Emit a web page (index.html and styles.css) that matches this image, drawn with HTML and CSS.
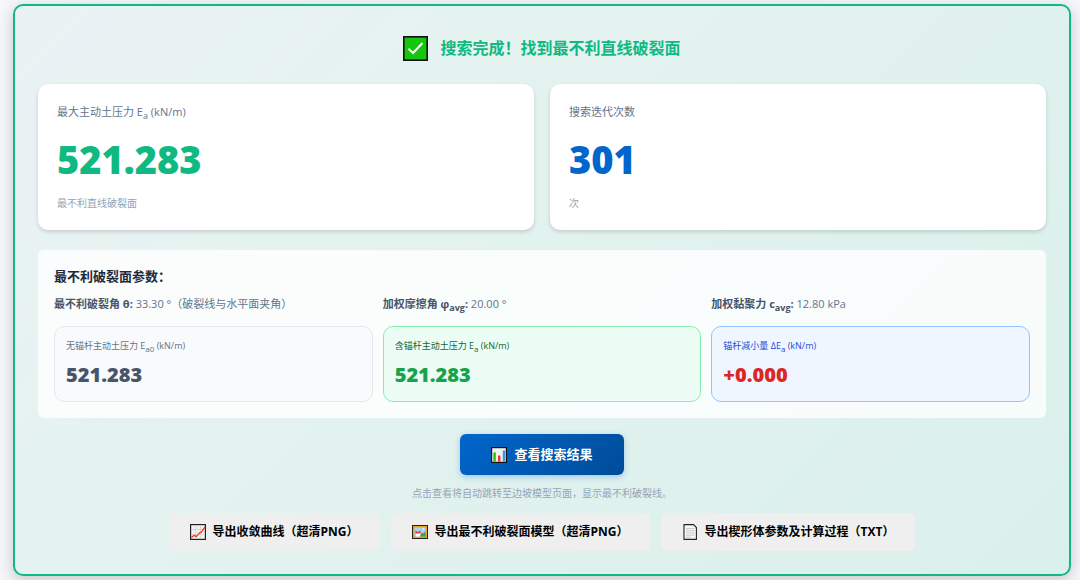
FILE: index.html
```html
<!DOCTYPE html>
<html lang="zh-CN">
<head>
  <meta charset="UTF-8" />
  <meta name="viewport" content="width=device-width, initial-scale=1" />
  <title>最不利直线破裂面搜索</title>
  <link rel="stylesheet" href="styles.css">
</head>
<body>
  <main class="result-panel">
    <h2 class="result-title">
      <svg class="icon-done" viewBox="0 0 25 25" aria-hidden="true">
        <rect x="0.8" y="0.8" width="23.4" height="23.4" fill="#16c60c" stroke="#111" stroke-width="1.6"/>
        <path d="M5.5 12.8 L10 17 L19.5 7" fill="none" stroke="#fff" stroke-width="2"/>
      </svg>
      搜索完成！找到最不利直线破裂面
    </h2>

    <div class="summary">
      <div class="card">
        <div class="card-label">最大主动土压力 E<sub>a</sub> (kN/m)</div>
        <div class="card-value green">521.283</div>
        <div class="card-note">最不利直线破裂面</div>
      </div>
      <div class="card">
        <div class="card-label">搜索迭代次数</div>
        <div class="card-value blue">301</div>
        <div class="card-note">次</div>
      </div>
    </div>

    <section class="params">
      <h3>最不利破裂面参数：</h3>
      <div class="param-grid">
        <div class="param"><strong>最不利破裂角 θ:</strong> 33.30 °（破裂线与水平面夹角）</div>
        <div class="param"><strong>加权摩擦角 φ<sub>avg</sub>:</strong> 20.00 °</div>
        <div class="param"><strong>加权黏聚力 c<sub>avg</sub>:</strong> 12.80 kPa</div>
        <div class="box box-gray">
          <div class="box-label">无锚杆主动土压力 E<sub>a0</sub> (kN/m)</div>
          <div class="box-value">521.283</div>
        </div>
        <div class="box box-green">
          <div class="box-label">含锚杆主动土压力 E<sub>a</sub> (kN/m)</div>
          <div class="box-value">521.283</div>
        </div>
        <div class="box box-blue">
          <div class="box-label">锚杆减小量 ΔE<sub>a</sub> (kN/m)</div>
          <div class="box-value">+0.000</div>
        </div>
      </div>
    </section>

    <div class="actions">
      <button type="button" class="btn btn-primary">
        <svg class="icon" viewBox="0 0 16 16" aria-hidden="true">
          <rect x="0.6" y="0.6" width="14.8" height="14.8" fill="#f2f2f2" stroke="#111" stroke-width="1.2"/>
          <rect x="2.4" y="5.5" width="2.4" height="9.2" fill="#16c60c"/>
          <rect x="7" y="8.5" width="2.4" height="6.2" fill="#f03a17"/>
          <rect x="11.8" y="3.5" width="2.4" height="11.2" fill="#3a96dd"/>
        </svg>
        查看搜索结果
      </button>
      <p class="hint">点击查看将自动跳转至边坡模型页面，显示最不利破裂线。</p>
    </div>

    <div class="exports">
      <button type="button" class="btn btn-export">
        <svg class="icon" viewBox="0 0 16 16" aria-hidden="true">
          <rect x="0.6" y="0.6" width="14.8" height="14.8" fill="#f2f2f2" stroke="#222" stroke-width="1.2"/>
          <path d="M5.5 1.2V15M10.5 1.2V15M1.2 5.5H15M1.2 10.5H15" stroke="#d0d0d0" stroke-width="0.8"/>
          <path d="M1.5 13.5 L4 11.2 L6.2 12.6 L10 8.4 L11 8.6 L15 3" fill="none" stroke="#f03a17" stroke-width="1.3"/>
        </svg>
        导出收敛曲线（超清PNG）
      </button>
      <button type="button" class="btn btn-export">
        <svg class="icon" viewBox="0 0 16 16" aria-hidden="true">
          <rect x="0.5" y="1.5" width="15" height="13" fill="#e8a526" stroke="#222"/>
          <rect x="2.5" y="3.5" width="11" height="9" fill="#a9d5f5"/>
          <path d="M8 12.5 L10 8.5 L11.5 9.5 L13.5 7 V12.5Z" fill="#767676"/>
          <path d="M9 12.5 Q11 9.8 13.5 10.5 V12.5Z" fill="#16c60c"/>
          <rect x="4" y="9" width="4" height="3.5" fill="#fff"/>
          <path d="M3.4 9.4 V6.5 L6 8 L8.6 6.5 V9.4Z" fill="#e0402c"/>
          <circle cx="11.5" cy="5" r="1" fill="#fff2a0"/>
        </svg>
        导出最不利破裂面模型（超清PNG）
      </button>
      <button type="button" class="btn btn-export">
        <svg class="icon" viewBox="0 0 16 16" aria-hidden="true">
          <path d="M2 0.6 H11.5 L14.4 3.5 V15.4 H2Z" fill="#f7f7f7" stroke="#222" stroke-width="1.1"/>
          <path d="M4 4.5H12.5M4 6.7H12.5M4 8.9H12.5M4 11.1H12.5M4 13.2H9" stroke="#c4c4c4" stroke-width="0.9"/>
        </svg>
        导出楔形体参数及计算过程（TXT）
      </button>
    </div>
  </main>
</body>
</html>
```

FILE: styles.css
```css
* {
  box-sizing: border-box;
}
body {
  margin: 0;
  padding: 4px 9px 4px 13px;
  font-family: "Open Sans", "Noto Sans CJK SC", sans-serif;
  font-size: 11px;
  line-height: 16px;
  color: #64748b;
  background: #f5f7fb;
}
h2, h3, p {
  margin: 0;
}
sub {
  font-size: 9px;
  line-height: 0;
}

.result-panel {
  padding: 24px 23px 23px;
  border: 2px solid #10b981;
  border-radius: 10px;
  background: linear-gradient(135deg, #ebf2f5, #e5f3f0 30%, #daf0eb);
  box-shadow: 0 4px 16px rgba(0, 0, 0, 0.2);
}
.result-title {
  display: flex;
  justify-content: center;
  align-items: center;
  gap: 12px;
  margin-bottom: 18px;
  font-size: 16px;
  line-height: 36px;
  font-weight: 700;
  color: #10b981;
}
.icon-done {
  width: 25px;
  height: 25px;
}

/* Summary cards */
.summary {
  display: grid;
  grid-template-columns: 1fr 1fr;
  gap: 16px;
}
.card {
  padding: 20px 19px 18px;
  min-height: 146px;
  border-radius: 10px;
  background: #fff;
  box-shadow: 0 2px 4px rgba(0, 0, 0, 0.15);
}
.card-value {
  margin: 12px 0 9px;
  font-size: 38px;
  line-height: 54px;
  font-weight: 800;
}
.card-note {
  font-size: 10px;
  color: #94a3b8;
}
.green {
  color: #10b981;
}
.blue {
  color: #0066cc;
}

/* Parameters */
.params {
  margin-top: 20px;
  padding: 16px;
  border-radius: 6px;
  background: rgba(255, 255, 255, 0.8);
}
.params h3 {
  margin-bottom: 8px;
  font-size: 13px;
  line-height: 20px;
  font-weight: 700;
  color: #1e293b;
}
.param-grid {
  display: grid;
  grid-template-columns: repeat(3, 1fr);
  gap: 12px 10px;
  line-height: 20px;
}
.param strong {
  color: #475569;
}
.box {
  padding: 10px 11px;
  border: 1px solid;
  border-radius: 10px;
}
.box-label {
  font-size: 9px;
  line-height: 18px;
}
.box-label sub {
  font-size: 8px;
}
.box-value {
  margin-top: 4px;
  font-size: 20px;
  line-height: 32px;
  font-weight: 800;
}
.box-gray {
  border-color: #e2e8f0;
  background: #f8fafc;
}
.box-gray .box-value {
  color: #475569;
}
.box-green {
  border-color: #86efac;
  background: #ecfdf5;
  color: #166534;
}
.box-green .box-value {
  color: #16a34a;
}
.box-blue {
  border-color: #93c5fd;
  background: #eff6ff;
  color: #1d4ed8;
}
.box-blue .box-value {
  color: #dc2626;
}

/* Buttons */
.btn {
  display: flex;
  align-items: center;
  gap: 7px;
  border: none;
  border-radius: 6px;
  font-family: inherit;
  font-weight: 700;
  cursor: pointer;
}
.icon {
  width: 16px;
  height: 16px;
}
.actions {
  display: flex;
  flex-direction: column;
  align-items: center;
  margin-top: 16px;
}
.btn-primary {
  padding: 10px 31px;
  font-size: 13px;
  line-height: 21px;
  color: #fff;
  background: linear-gradient(135deg, #0066cc, #004c99);
  box-shadow: 0 2px 6px rgba(0, 102, 204, 0.3);
}
.hint {
  margin-top: 10px;
  font-size: 10px;
  color: #94a3b8;
}
.exports {
  display: flex;
  flex-wrap: wrap;
  justify-content: center;
  gap: 11px;
  margin-top: 12px;
}
.btn-export {
  padding: 10px 21px;
  font-size: 12px;
  line-height: 18px;
  color: #000;
  background: #efefef;
}
```
